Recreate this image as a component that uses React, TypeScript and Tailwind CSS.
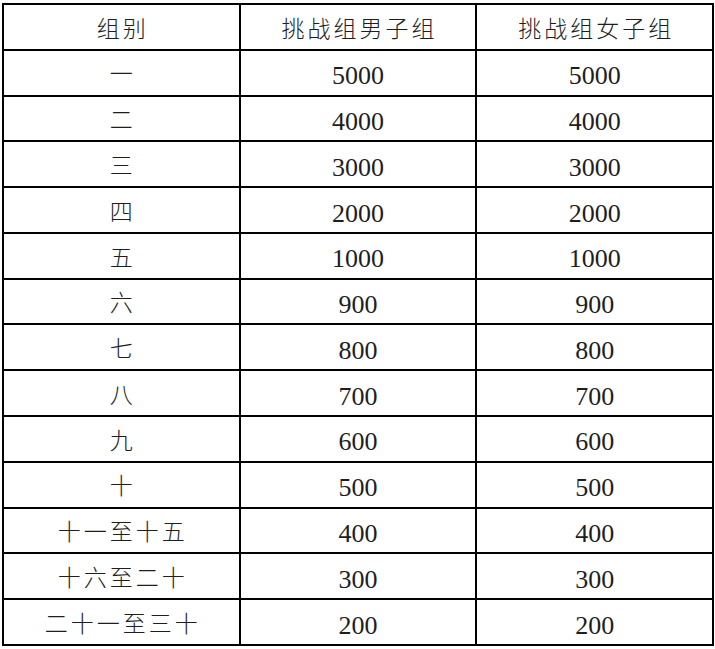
const rows: [string, string, string][] = [
  ['一', '5000', '5000'],
  ['二', '4000', '4000'],
  ['三', '3000', '3000'],
  ['四', '2000', '2000'],
  ['五', '1000', '1000'],
  ['六', '900', '900'],
  ['七', '800', '800'],
  ['八', '700', '700'],
  ['九', '600', '600'],
  ['十', '500', '500'],
  ['十一至十五', '400', '400'],
  ['十六至二十', '300', '300'],
  ['二十一至三十', '200', '200'],
]

const cjk = "font-['Liberation_Serif','Noto_Sans_CJK_SC',serif] font-light text-[23px] tracking-[3px] pl-[3px]"
const num = "font-['Liberation_Serif',serif] text-[26px]"

export default function App() {
  return (
    <div className="w-[715px] h-[649px] bg-white pl-[2px] pt-[3px]">
      <div className="grid grid-cols-3 grid-rows-14 gap-[2px] p-[2px] bg-black w-[712px] h-[643px] text-[#1e1e1e]">
        {['组别', '挑战组男子组', '挑战组女子组'].map((h) => (
          <div key={h} className={`bg-white flex items-center justify-center pt-[6px] ${cjk}`}>
            {h}
          </div>
        ))}
        {rows.map(([g, m, f]) => (
          <div key={g} className="contents">
            <div className={`bg-white flex items-center justify-center pt-[6px] ${cjk}`}>{g}</div>
            <div className={`bg-white flex items-center justify-center pt-[6px] ${num}`}>{m}</div>
            <div className={`bg-white flex items-center justify-center pt-[6px] ${num}`}>{f}</div>
          </div>
        ))}
      </div>
    </div>
  )
}
